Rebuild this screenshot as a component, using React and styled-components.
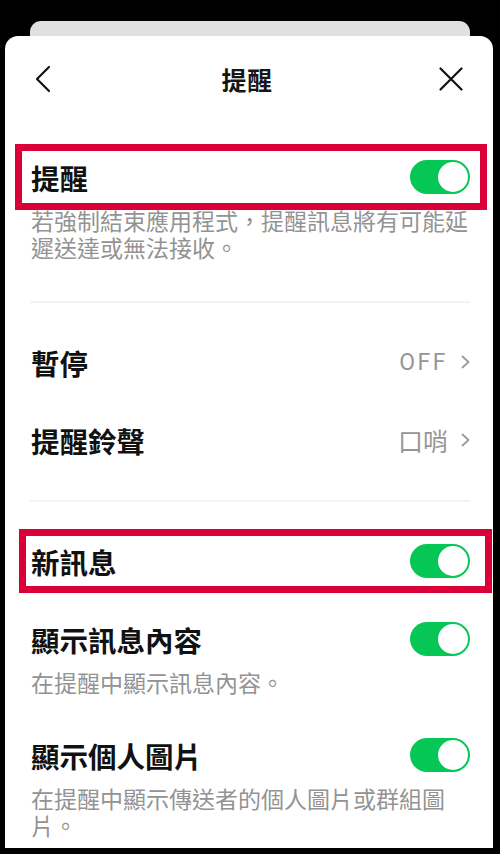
import React from "react";
import styled, { createGlobalStyle } from "styled-components";

const GlobalStyle = createGlobalStyle`
  html, body {
    margin: 0;
    padding: 0;
    background: #000;
  }
  body {
    font-family: "Noto Sans CJK TC", "Noto Sans", sans-serif;
    -webkit-font-smoothing: antialiased;
  }
`;

const Page = styled.div`
  width: 500px;
  height: 854px;
  background: #000;
  padding-top: 21px;
  box-sizing: border-box;
  overflow: hidden;
`;

const BackCard = styled.div`
  height: 30px;
  margin: 0 30px;
  background: #e0e0e0;
  border-radius: 11px 11px 0 0;
`;

const Sheet = styled.div`
  position: relative;
  margin: -15px 7px 0 5px;
  height: 812px;
  background: #fff;
  border-radius: 13px 13px 0 0;
  overflow: hidden;
`;

const Header = styled.header`
  height: 86px;
  display: flex;
  align-items: center;
  justify-content: space-between;
  padding: 0 30px 0 26px;
`;

const IconButton = styled.button`
  width: 24px;
  height: 28px;
  padding: 0;
  border: 0;
  background: none;
  display: flex;
  align-items: center;
  justify-content: center;
  color: #111;
`;

const Title = styled.h1`
  margin: 0;
  font-size: 25px;
  font-weight: 700;
  color: #161616;
  letter-spacing: 0.5px;
`;

const Content = styled.div`
  padding: 0 23px 0 25px;
`;

const Section = styled.section`
  display: flex;
  flex-direction: column;
  gap: 12px;
  padding: ${(p) => p.$pad};
`;

const Divider = styled.div`
  height: 2px;
  background: #f3f3f3;
`;

const Row = styled.div`
  position: relative;
  height: 66px;
  display: flex;
  align-items: center;
  justify-content: space-between;

  ${(p) =>
    p.$highlight &&
    `
    &::after {
      content: "";
      position: absolute;
      top: ${p.$hlTop ?? 0}px;
      bottom: ${p.$hlBottom ?? 0}px;
      left: -${p.$hlLeft}px;
      right: -${p.$hlRight}px;
      border: 7px solid #dc0039;
      pointer-events: none;
    }
  `}
`;

const Label = styled.span`
  font-size: 28.5px;
  font-weight: 700;
  color: #111;
  padding-left: 1px;
`;

const Desc = styled.p`
  margin: -3px 0 0;
  font-size: 23px;
  line-height: 27px;
  color: #939393;
  padding-left: 1px;
  padding-bottom: ${(p) => p.$pb ?? 0}px;
`;

const Value = styled.span`
  display: flex;
  align-items: center;
  gap: 13px;
  color: #969696;
  font-size: ${(p) => (p.$latin ? "23px" : "25px")};
  font-family: ${(p) => (p.$latin ? '"Roboto", sans-serif' : "inherit")};
  letter-spacing: ${(p) => (p.$latin ? "2.5px" : "0")};
`;

const SwitchTrack = styled.div`
  width: 60px;
  height: 34px;
  border-radius: 17px;
  background: #06c755;
  position: relative;
  flex-shrink: 0;
`;

const SwitchKnob = styled.div`
  position: absolute;
  top: 2px;
  right: 2px;
  width: 30px;
  height: 30px;
  border-radius: 50%;
  background: #fff;
`;

const Toggle = () => (
  <SwitchTrack>
    <SwitchKnob />
  </SwitchTrack>
);

const Chevron = () => (
  <svg width="9" height="14" viewBox="0 0 9 14" fill="none">
    <path d="M1.5 1.5 L7.5 7 L1.5 12.5" stroke="#9a9a9a" strokeWidth="1.8" strokeLinecap="round" strokeLinejoin="round" />
  </svg>
);

const BackIcon = () => (
  <svg width="18" height="28" viewBox="0 0 18 28" fill="none">
    <path d="M15 2 L3 14 L15 26" stroke="#111" strokeWidth="2.2" strokeLinecap="round" strokeLinejoin="round" />
  </svg>
);

const CloseIcon = () => (
  <svg width="24" height="24" viewBox="0 0 24 24" fill="none">
    <path d="M1.5 1.5 L22.5 22.5 M22.5 1.5 L1.5 22.5" stroke="#111" strokeWidth="2.2" strokeLinecap="round" />
  </svg>
);

export default function App() {
  return (
    <Page>
      <GlobalStyle />
      <BackCard />
      <Sheet>
        <Header>
          <IconButton aria-label="返回">
            <BackIcon />
          </IconButton>
          <Title>提醒</Title>
          <IconButton aria-label="關閉">
            <CloseIcon />
          </IconButton>
        </Header>
        <Content>
          <Section $pad="22px 0 40px">
            <div>
              <Row $highlight $hlLeft={15} $hlRight={17}>
                <Label>提醒</Label>
                <Toggle />
              </Row>
              <Desc>
                若強制結束應用程式，提醒訊息將有可能延
                <br />
                遲送達或無法接收。
              </Desc>
            </div>
          </Section>
          <Divider />
          <Section $pad="26px 0 27px">
            <Row>
              <Label>暫停</Label>
              <Value $latin>
                OFF
                <Chevron />
              </Value>
            </Row>
            <Row>
              <Label>提醒鈴聲</Label>
              <Value>
                口哨
                <Chevron />
              </Value>
            </Row>
          </Section>
          <Divider />
          <Section $pad="26px 0 0">
            <Row $highlight $hlLeft={11} $hlRight={22} $hlTop={1} $hlBottom={1}>
              <Label>新訊息</Label>
              <Toggle />
            </Row>
            <div>
              <Row>
                <Label>顯示訊息內容</Label>
                <Toggle />
              </Row>
              <Desc $pb={14}>在提醒中顯示訊息內容。</Desc>
            </div>
            <div>
              <Row>
                <Label>顯示個人圖片</Label>
                <Toggle />
              </Row>
              <Desc>
                在提醒中顯示傳送者的個人圖片或群組圖
                <br />
                片。
              </Desc>
            </div>
          </Section>
        </Content>
      </Sheet>
    </Page>
  );
}
